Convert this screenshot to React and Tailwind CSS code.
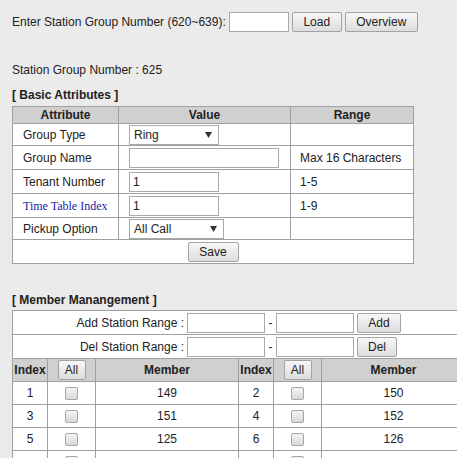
import React from "react";

const F = "font-['Liberation_Sans',Arial,Helvetica,sans-serif]";

function Btn({ children, className = "" }) {
  return (
    <button
      className={`h-[20px] border border-[#a3a3a3] rounded-[2px] bg-linear-to-b from-[#f7f7f7] to-[#dddddd] text-[12px] leading-none text-[#222] ${className}`}
    >
      {children}
    </button>
  );
}

function TextBox({ className = "", value = "" }) {
  return (
    <input
      readOnly
      value={value}
      className={`h-[20px] border border-[#a9a9a9] bg-white px-[3px] text-[12px] text-[#222] outline-none ${F} ${className}`}
    />
  );
}

function Arrow() {
  return (
    <svg width="7" height="6" viewBox="0 0 7 6" className="shrink-0">
      <polygon points="0,0 7,0 3.5,6" fill="#333" />
    </svg>
  );
}

function FakeSelect({ label, className = "" }) {
  return (
    <div
      className={`h-[20px] border border-[#a9a9a9] bg-white flex items-center justify-between pl-[4px] pr-[6px] text-[12px] text-[#222] ${className}`}
    >
      <span>{label}</span>
      <Arrow />
    </div>
  );
}

function Check() {
  return (
    <span className="inline-block align-middle w-[13px] h-[13px] border border-[#a6a6a6] rounded-[2px] bg-linear-to-b from-[#f4f4f4] to-[#d8d8d8]" />
  );
}

const td = "border border-[#a0a0a0] p-0";

export default function App() {
  const members = [
    [1, 149, 2, 150],
    [3, 151, 4, 152],
    [5, 125, 6, 126],
    ["", "", "", ""],
  ];
  return (
    <div className={`w-[457px] h-[458px] overflow-hidden bg-[#ebebeb] text-[12px] leading-[14px] text-[#222] ${F}`}>
      <div className="pt-[12px] pl-[12px] flex flex-col">
        <div className="flex items-center h-[20px]">
          <span>Enter Station Group Number (620~639):</span>
          <TextBox className="ml-[3px] w-[60px]" />
          <Btn className="ml-[3px] w-[50px]">Load</Btn>
          <Btn className="ml-[3px] w-[73px]">Overview</Btn>
        </div>

        <div className="mt-[31px]">Station Group Number : 625</div>
        <div className="mt-[11px] font-bold">[ Basic Attributes ]</div>

        <table className="mt-[4px] border-collapse table-fixed w-[401px] bg-white">
          <colgroup>
            <col className="w-[106px]" />
            <col className="w-[172px]" />
            <col className="w-[123px]" />
          </colgroup>
          <tbody>
            <tr className="h-[17px] bg-[#d0d0d0] font-bold text-center">
              <td className={td}>Attribute</td>
              <td className={td}>Value</td>
              <td className={td}>Range</td>
            </tr>
            <tr className="h-[22px]">
              <td className={`${td} pl-[10px]`}>Group Type</td>
              <td className={`${td} pl-[10px]`}>
                <FakeSelect label="Ring" className="w-[90px]" />
              </td>
              <td className={td}></td>
            </tr>
            <tr className="h-[24px]">
              <td className={`${td} pl-[10px]`}>Group Name</td>
              <td className={`${td} pl-[10px]`}>
                <TextBox className="w-[150px] block" />
              </td>
              <td className={`${td} pl-[9px]`}>Max 16 Characters</td>
            </tr>
            <tr className="h-[24px]">
              <td className={`${td} pl-[10px]`}>Tenant Number</td>
              <td className={`${td} pl-[10px]`}>
                <TextBox className="w-[90px] block" value="1" />
              </td>
              <td className={`${td} pl-[9px]`}>1-5</td>
            </tr>
            <tr className="h-[24px]">
              <td className={`${td} pl-[10px] text-[#1c1ca8] font-['Liberation_Serif','Times_New_Roman',serif]`}>
                Time Table Index
              </td>
              <td className={`${td} pl-[10px]`}>
                <TextBox className="w-[90px] block" value="1" />
              </td>
              <td className={`${td} pl-[9px]`}>1-9</td>
            </tr>
            <tr className="h-[22px]">
              <td className={`${td} pl-[10px]`}>Pickup Option</td>
              <td className={`${td} pl-[10px]`}>
                <FakeSelect label="All Call" className="w-[95px]" />
              </td>
              <td className={td}></td>
            </tr>
            <tr className="h-[24px]">
              <td className={`${td} text-center`} colSpan={3}>
                <Btn className="w-[51px]">Save</Btn>
              </td>
            </tr>
          </tbody>
        </table>

        <div className="mt-[29px] font-bold">[ Member Manangement ]</div>

        <table className="mt-[3px] border-collapse table-fixed w-[453px] bg-white">
          <colgroup>
            <col className="w-[35px]" />
            <col className="w-[48px]" />
            <col className="w-[143px]" />
            <col className="w-[35px]" />
            <col className="w-[48px]" />
            <col className="w-[144px]" />
          </colgroup>
          <tbody>
            {[
              ["Add Station Range :", "Add", "w-[44px]"],
              ["Del Station Range :", "Del", "w-[40px]"],
            ].map(([label, btn, bw]) => (
              <tr key={btn} className="h-[24px]">
                <td className={td} colSpan={6}>
                  <div className="flex items-center">
                    <span className="w-[171px] text-right">{label}</span>
                    <TextBox className="ml-[3px] w-[78px]" />
                    <span className="w-[11px] text-center">-</span>
                    <TextBox className="w-[78px]" />
                    <Btn className={`ml-[3px] ${bw}`}>{btn}</Btn>
                  </div>
                </td>
              </tr>
            ))}
            <tr className="h-[23px] bg-[#d0d0d0] font-bold text-center">
              <td className={td}>Index</td>
              <td className={td}>
                <Btn className="w-[28px] h-[18px] font-normal">All</Btn>
              </td>
              <td className={td}>Member</td>
              <td className={td}>Index</td>
              <td className={td}>
                <Btn className="w-[28px] h-[18px] font-normal">All</Btn>
              </td>
              <td className={td}>Member</td>
            </tr>
            {members.map((m, i) => (
              <tr key={i} className="h-[23px] text-center">
                <td className={td}>{m[0]}</td>
                <td className={td}>
                  <Check />
                </td>
                <td className={td}>{m[1]}</td>
                <td className={td}>{m[2]}</td>
                <td className={td}>
                  <Check />
                </td>
                <td className={td}>{m[3]}</td>
              </tr>
            ))}
          </tbody>
        </table>
      </div>
    </div>
  );
}
